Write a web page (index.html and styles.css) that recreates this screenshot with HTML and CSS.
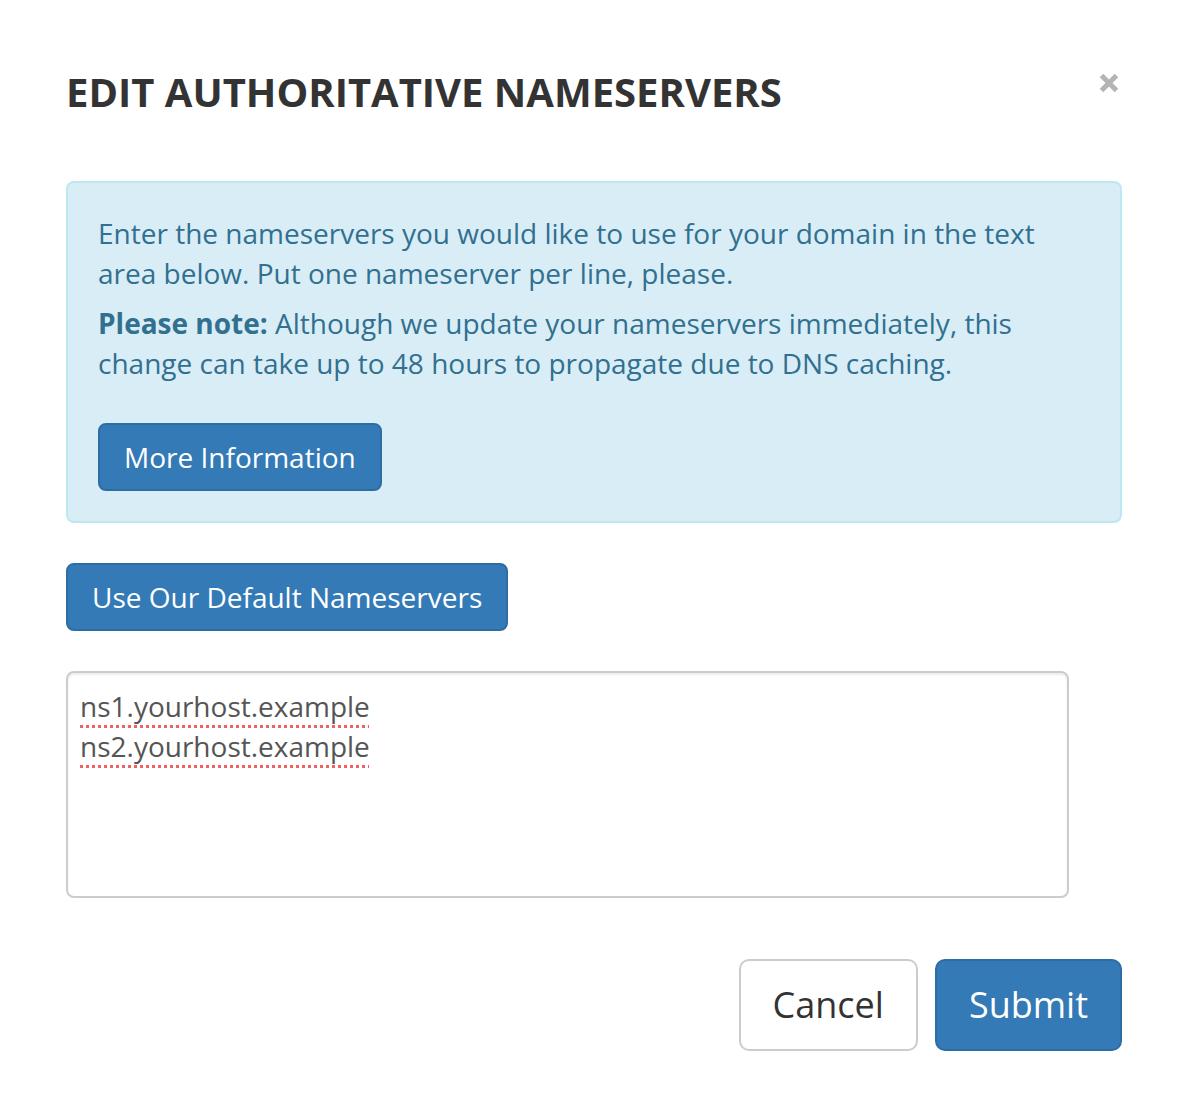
FILE: index.html
```html
<!DOCTYPE html>
<html lang="en">
<head>
<meta charset="utf-8">
<title>Edit Authoritative Nameservers</title>
<link rel="stylesheet" href="styles.css">
</head>
<body>
<div class="modal">
  <div class="modal-header">
    <h4 class="modal-title">EDIT AUTHORITATIVE NAMESERVERS</h4>
    <button class="close" type="button" aria-label="Close">
      <svg width="20" height="20" viewBox="0 0 20 20"><path d="M2.5 2.5 L17.5 17.5 M17.5 2.5 L2.5 17.5" stroke="#b4b4b4" stroke-width="5" stroke-linecap="butt"/></svg>
    </button>
  </div>
  <div class="alert">
    <p>Enter the nameservers you would like to use for your domain in the text area below. Put one nameserver per line, please.</p>
    <p class="note"><strong>Please note:</strong> Although we update your nameservers immediately, this change can take up to 48 hours to propagate due to DNS caching.</p>
    <div class="alert-actions"><button class="btn btn-primary" type="button">More Information</button></div>
  </div>
  <div class="default-row"><button class="btn btn-primary" type="button">Use Our Default Nameservers</button></div>
  <textarea class="form-control" spellcheck="true">ns1.yourhost.example
ns2.yourhost.example</textarea>
  <div class="modal-footer">
    <button class="btn btn-lg btn-default" type="button">Cancel</button>
    <button class="btn btn-lg btn-primary" type="button">Submit</button>
  </div>
</div>
</body>
</html>
```

FILE: styles.css
```css
html, body {
  margin: 0;
  padding: 0;
  background: #fff;
}
body {
  font-family: "Open Sans", "Liberation Sans", sans-serif;
  color: #333;
}
.modal {
  display: flex;
  flex-direction: column;
  padding: 0 64px 0 66px;
}
.modal-header {
  display: flex;
  justify-content: space-between;
  align-items: flex-start;
  padding-top: 72px;
}
.modal-title {
  margin: 0;
  font-size: 40px;
  line-height: 40px;
  font-weight: 700;
  color: #333;
  letter-spacing: 0;
}
.close {
  background: none;
  border: 0;
  padding: 0;
  margin: 1px 3px 0 0;
  line-height: 0;
  cursor: pointer;
}
.alert {
  margin-top: 69px;
  background: #d9edf7;
  border: 2px solid #bce8f1;
  border-radius: 8px;
  padding: 30px 30px 30px;
  color: #31708f;
  font-size: 28px;
  line-height: 40px;
}
.alert p {
  margin: 0;
}
.alert p.note {
  margin-top: 10px;
}
.alert strong {
  font-weight: 700;
}
.alert-actions {
  margin-top: 40px;
  display: flex;
}
.btn {
  font-family: "Open Sans", "Liberation Sans", sans-serif;
  font-size: 28px;
  line-height: 40px;
  padding: 12px 24px;
  border: 2px solid transparent;
  border-radius: 8px;
  cursor: pointer;
  white-space: nowrap;
}
.btn-primary {
  background: #337ab7;
  border-color: #2e6da4;
  color: #fff;
}
.btn-default {
  background: #fff;
  border-color: #ccc;
  color: #333;
}
.btn-lg {
  font-size: 36px;
  line-height: 48px;
  padding: 20px 32px;
  border-radius: 10px;
}
.default-row {
  display: flex;
  margin-top: 40px;
}
.form-control {
  margin-top: 40px;
  width: 1003px;
  height: 227px;
  box-sizing: border-box;
  border: 2px solid #ccc;
  border-radius: 8px;
  padding: 13px 12px;
  font-family: "Open Sans", "Liberation Sans", sans-serif;
  font-size: 28px;
  line-height: 40px;
  color: #555;
  resize: none;
  box-shadow: inset 0 2px 2px rgba(0,0,0,.075);
  text-decoration: underline dotted #f26161;
  text-decoration-thickness: 3px;
  text-underline-offset: 8px;
  outline: none;
}
.modal-footer {
  display: flex;
  justify-content: flex-end;
  gap: 17px;
  margin-top: 61px;
}
```
